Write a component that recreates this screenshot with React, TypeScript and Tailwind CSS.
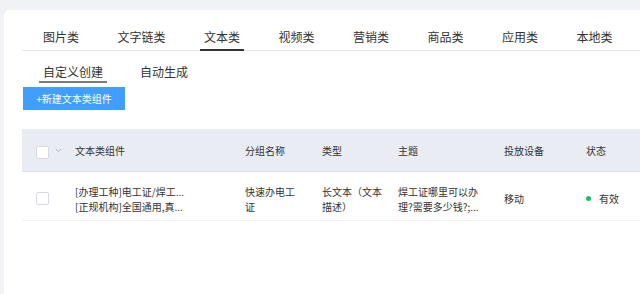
import React from "react";

const font = { fontFamily: '"Noto Sans CJK SC", "Noto Sans", sans-serif' };

const tabs = ["图片类", "文字链类", "文本类", "视频类", "营销类", "商品类", "应用类", "本地类"];

function Checkbox({ className = "" }: { className?: string }) {
  return <div className={"w-[13px] h-[13px] bg-white border border-[#d7dae2] rounded-[2px] shrink-0 " + className} />;
}

export default function App() {
  return (
    <div className="w-[640px] h-[294px] overflow-hidden bg-[#f0f2f5] pt-[10px] pl-[4px]" style={font}>
      <div className="bg-white rounded-tl-[6px] h-full pl-[18px] pt-[19px] text-[#333]">
        {/* Top tabs */}
        <div className="flex border-b border-[#e8e8e8] pl-[17px] gap-[30.5px]">
          {tabs.map((t) => (
            <div
              key={t}
              className={
                "px-1 text-[12px] leading-[16px] pb-[4px] -mb-px border-b-2 whitespace-nowrap " +
                (t === "文本类" ? "border-[#333]" : "border-transparent")
              }
            >
              {t}
            </div>
          ))}
        </div>

        {/* Sub tabs */}
        <div className="flex mt-[13px] pl-[17px] gap-[29px]">
          <div className="px-1 text-[12px] leading-[16px] pb-px border-b-2 border-[#7a7a7a]">自定义创建</div>
          <div className="px-1 text-[12px] leading-[16px] pb-px border-b-2 border-transparent">自动生成</div>
        </div>

        {/* Button */}
        <div className="mt-[4px] ml-px w-[102px] h-[23px] bg-[#409eff] text-white text-[10px] flex items-center justify-center">
          +新建文本类组件
        </div>

        {/* Table */}
        <div className="mt-[19px] text-[10px]">
          <div className="flex items-center h-[43px] bg-[#e9ecf3] border-b border-[#dde1ea]">
            <div className="w-[53px] pl-[14px] flex items-center gap-[6px] shrink-0">
              <Checkbox className="mt-[5px]" />
              <svg width="7" height="5" viewBox="0 0 7 5" className="mt-[1px]">
                <path d="M0.8 1 L3.5 3.6 L6.2 1" fill="none" stroke="#a9afbb" strokeWidth="0.9" />
              </svg>
            </div>
            <div className="w-[170px] shrink-0">文本类组件</div>
            <div className="w-[77px] shrink-0">分组名称</div>
            <div className="w-[76px] shrink-0">类型</div>
            <div className="w-[106px] shrink-0">主题</div>
            <div className="w-[82px] shrink-0">投放设备</div>
            <div className="shrink-0">状态</div>
          </div>
          <div className="flex items-center h-[49px] pt-[5px] border-b border-[#eef0f4] leading-[15px]">
            <div className="w-[53px] pl-[14px] flex items-center shrink-0">
              <Checkbox />
            </div>
            <div className="w-[170px] shrink-0 whitespace-nowrap">
              <div>[办理工种]电工证/焊工...</div>
              <div>[正规机构]全国通用,真...</div>
            </div>
            <div className="w-[77px] shrink-0">
              <div>快速办电工</div>
              <div>证</div>
            </div>
            <div className="w-[76px] shrink-0 whitespace-nowrap">
              <div>长文本（文本</div>
              <div>描述）</div>
            </div>
            <div className="w-[106px] shrink-0 whitespace-nowrap">
              <div>焊工证哪里可以办</div>
              <div>理?需要多少钱?;...</div>
            </div>
            <div className="w-[82px] shrink-0">移动</div>
            <div className="shrink-0 flex items-center">
              <span className="w-[5px] h-[5px] rounded-full bg-[#19c25a] mr-[8px]" />
              <span>有效</span>
            </div>
          </div>
        </div>
      </div>
    </div>
  );
}
